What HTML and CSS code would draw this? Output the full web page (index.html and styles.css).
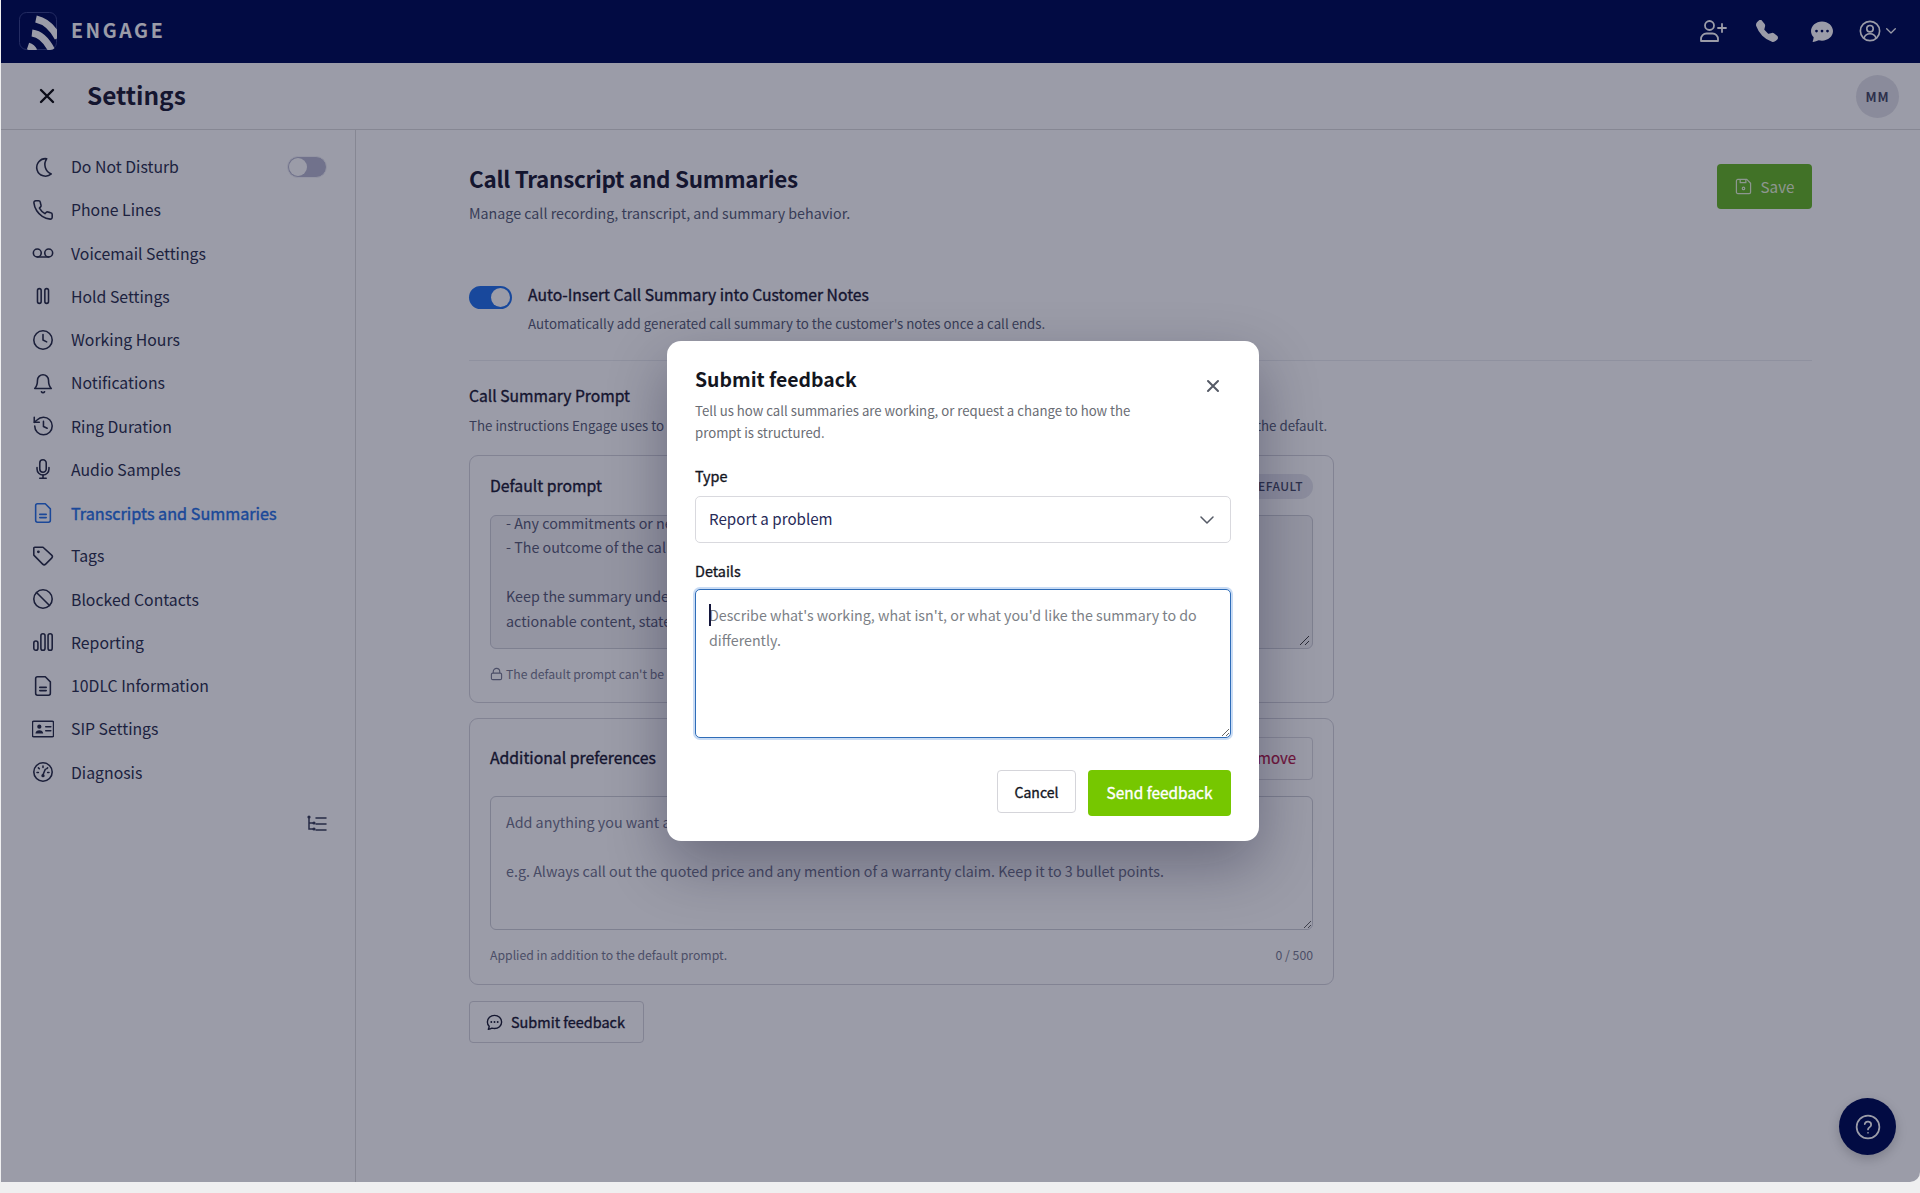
FILE: index.html
```html
<!DOCTYPE html>
<html lang="en">
<head>
<meta charset="utf-8">
<title>Settings</title>
<link rel="stylesheet" href="styles.css">
</head>
<body>
<div class="app">
  <header class="topbar">
    <div class="brand">
      <svg class="logo" viewBox="0 0 38 38"><defs><clipPath id="lc"><rect width="38" height="38" rx="7"/></clipPath></defs><rect x=".5" y=".5" width="37" height="37" rx="7" fill="#000d55" stroke="#39458a"/><g clip-path="url(#lc)" fill="none" stroke="#fff" stroke-width="7"><path d="M17 7c9 2 17 9 22 19"/><path d="M13 21c9 1 15 8 20 18"/><path d="M9 34c3 1 5 3 6 5"/></g></svg>
      <span class="brand-name">ENGAGE</span>
    </div>
    <div class="top-actions">
      <svg class="ti" viewBox="0 0 27 24"><path d="M1.5 22v-2a5.5 5.5 0 0 1 5.5-5.500h6a5.500 5.500 0 0 1 5.500 5.500v2z"/><circle cx="10" cy="6.500" r="4.500"/><path d="M22.500 5v8M18.500 9h8"/></svg>
      <svg class="tf" viewBox="0 0 16 16"><path d="M1.885.511a1.745 1.745 0 0 1 2.61.163L6.29 2.98c.329.423.445.974.315 1.494l-.547 2.19a.678.678 0 0 0 .178.643l2.457 2.457a.678.678 0 0 0 .644.178l2.189-.547a1.745 1.745 0 0 1 1.494.315l2.306 1.794c.829.645.905 1.87.163 2.611l-1.034 1.034c-.74.74-1.846 1.065-2.877.702a18.634 18.634 0 0 1-7.01-4.42 18.634 18.634 0 0 1-4.42-7.009c-.362-1.03-.037-2.137.703-2.877L1.885.511z"/></svg>
      <svg class="tf tf-chat" viewBox="0 0 16 16"><path d="M16 8c0 3.866-3.582 7-8 7a9.06 9.06 0 0 1-2.347-.306c-.584.296-1.925.864-4.181 1.234-.2.032-.352-.176-.273-.362.354-.836.674-1.95.77-2.966C.744 11.37 0 9.76 0 8c0-3.866 3.582-7 8-7s8 3.134 8 7zM5 8a1 1 0 1 0-2 0 1 1 0 0 0 2 0zm4 0a1 1 0 1 0-2 0 1 1 0 0 0 2 0zm3 1a1 1 0 1 0 0-2 1 1 0 0 0 0 2z"/></svg>
      <div class="account">
        <svg class="ti ti-user" viewBox="0 0 24 24"><circle cx="12" cy="12" r="10.500"/><circle cx="12" cy="9.500" r="3.500"/><path d="M5.500 19.500c1-3 3.500-4.500 6.500-4.500s5.500 1.500 6.500 4.500"/></svg>
        <svg class="ti ti-chev" viewBox="0 0 10 6"><path d="M.7.7 5 5l4.300-4.300"/></svg>
      </div>
    </div>
  </header>

  <div class="page-head">
    <div class="page-title">
      <svg class="close-main" viewBox="0 0 16 16"><path d="M2 2l12 12M14 2 2 14"/></svg>
      <h1>Settings</h1>
    </div>
    <div class="avatar">MM</div>
  </div>

  <div class="layout">
    <nav class="sidebar">
      <div class="nav-item">
        <svg class="ni" viewBox="0 0 24 24"><path d="M16 3a9.500 9.500 0 1 0 5 16.500A11 11 0 0 1 16 3z"/></svg>
        <span class="nav-label">Do Not Disturb</span>
        <span class="switch-off"><i></i></span>
      </div>
      <div class="nav-item">
        <svg class="ni" viewBox="0 0 24 24"><path d="M22 16.920v3a2 2 0 0 1-2.180 2 19.790 19.790 0 0 1-8.630-3.070 19.500 19.500 0 0 1-6-6 19.790 19.790 0 0 1-3.070-8.670A2 2 0 0 1 4.110 2h3a2 2 0 0 1 2 1.720 12.840 12.840 0 0 0 .7 2.810 2 2 0 0 1-.45 2.110L8.090 9.910a16 16 0 0 0 6 6l1.270-1.270a2 2 0 0 1 2.110-.45 12.840 12.840 0 0 0 2.810.7A2 2 0 0 1 22 16.920z"/></svg>
        <span class="nav-label">Phone Lines</span>
      </div>
      <div class="nav-item">
        <svg class="ni" viewBox="0 0 24 24"><circle cx="5.800" cy="12" r="4.300"/><circle cx="18.200" cy="12" r="4.300"/><path d="M5.800 16.300h12.400"/></svg>
        <span class="nav-label">Voicemail Settings</span>
      </div>
      <div class="nav-item">
        <svg class="ni" viewBox="0 0 24 24"><rect x="6" y="4" width="4" height="16" rx="2"/><rect x="14" y="4" width="4" height="16" rx="2"/></svg>
        <span class="nav-label">Hold Settings</span>
      </div>
      <div class="nav-item">
        <svg class="ni" viewBox="0 0 24 24"><circle cx="12" cy="12" r="10"/><path d="M12 6v6l4 2"/></svg>
        <span class="nav-label">Working Hours</span>
      </div>
      <div class="nav-item">
        <svg class="ni" viewBox="0 0 24 24"><path d="M6 9a6 6 0 0 1 12 0c0 6 3 9 3 9H3s3-3 3-9"/><path d="M10.300 21.500a2 2 0 0 0 3.400 0"/></svg>
        <span class="nav-label">Notifications</span>
      </div>
      <div class="nav-item">
        <svg class="ni" viewBox="0 0 24 24"><path d="M3 12a9.500 9.500 0 1 0 9.500-9.500A9.750 9.750 0 0 0 5.500 5.500L2.500 8"/><path d="M2.500 2.500V8H8"/><path d="M12.500 7v5.500l4 2"/></svg>
        <span class="nav-label">Ring Duration</span>
      </div>
      <div class="nav-item">
        <svg class="ni" viewBox="0 0 24 24"><path d="M12 2a3.500 3.500 0 0 0-3.500 3.500V12a3.500 3.500 0 0 0 7 0V5.500A3.500 3.500 0 0 0 12 2z"/><path d="M18.500 10.500V12a6.500 6.500 0 0 1-13 0v-1.500"/><path d="M12 18.500V22M8.500 22h7"/></svg>
        <span class="nav-label">Audio Samples</span>
      </div>
      <div class="nav-item is-active">
        <svg class="ni" viewBox="0 0 24 24"><path d="M14.500 2H6a2 2 0 0 0-2 2v16a2 2 0 0 0 2 2h12a2 2 0 0 0 2-2V7.500L14.500 2z"/><path d="M8.500 13.500h7M8.500 17h7"/></svg>
        <span class="nav-label">Transcripts and Summaries</span>
      </div>
      <div class="nav-item">
        <svg class="ni" viewBox="0 0 24 24"><path d="M12 2.500H3a1 1 0 0 0-1 1V11l9.600 9.800c.9.900 2.400.9 3.300 0l6.500-6.500c.9-.9.9-2.400 0-3.300L12 2.500z"/><circle cx="7" cy="7.500" r=".7"/></svg>
        <span class="nav-label">Tags</span>
      </div>
      <div class="nav-item">
        <svg class="ni" viewBox="0 0 24 24"><circle cx="12" cy="12" r="10"/><path d="M4.930 4.930l14.140 14.140"/></svg>
        <span class="nav-label">Blocked Contacts</span>
      </div>
      <div class="nav-item">
        <svg class="ni" viewBox="0 0 24 24"><rect x="2" y="11" width="4.500" height="10" rx="2.250"/><rect x="9.700" y="3" width="4.500" height="18" rx="2.250"/><rect x="17.500" y="3" width="4.500" height="18" rx="2.250"/></svg>
        <span class="nav-label">Reporting</span>
      </div>
      <div class="nav-item">
        <svg class="ni" viewBox="0 0 24 24"><path d="M14.500 2H6a2 2 0 0 0-2 2v16a2 2 0 0 0 2 2h12a2 2 0 0 0 2-2V7.500L14.500 2z"/><path d="M8.500 13.500h7M8.500 17h7"/></svg>
        <span class="nav-label">10DLC Information</span>
      </div>
      <div class="nav-item">
        <svg class="ni" viewBox="0 0 24 24"><rect x=".5" y="3.500" width="23" height="17" rx="1.500"/><circle class="ink" cx="8" cy="9.500" r="2.300"/><path class="ink" d="M3.800 17c0-2.500 2-3.700 4.200-3.700s4.200 1.200 4.200 3.700z"/><path d="M15 9.500h5.500M15 14h5.500"/></svg>
        <span class="nav-label">SIP Settings</span>
      </div>
      <div class="nav-item">
        <svg class="ni" viewBox="0 0 24 24"><circle cx="12" cy="12" r="10"/><path d="M12 15l2.500-6M12 5.500v1.500M7 7.500l1 1M5.500 12.500H7M17 7.500l-1 1M17 12.500h1.500"/><circle class="ink" cx="12" cy="16" r="1.800"/></svg>
        <span class="nav-label">Diagnosis</span>
      </div>
      <div class="nav-foot">
        <svg class="tree" viewBox="0 0 20 18"><path d="M2 2v12h5M2 8h5M9 3h10M9 9h10M9 15h10"/><circle class="dim-ink" cx="2" cy="2" r="1.600"/><circle class="dim-ink" cx="7" cy="8" r="1.600"/><circle class="dim-ink" cx="7" cy="14" r="1.600"/></svg>
      </div>
    </nav>

    <main class="main">
      <div class="main-head">
        <div>
          <h2 class="main-title">Call Transcript and Summaries</h2>
          <p class="main-sub">Manage call recording, transcript, and summary behavior.</p>
        </div>
        <button class="btn-save">
          <svg class="save-icon" viewBox="0 0 18 18"><path d="M3 1.500h9.500l4 4V15a1.500 1.500 0 0 1-1.500 1.500H3A1.500 1.500 0 0 1 1.500 15V3A1.500 1.500 0 0 1 3 1.500z"/><path d="M5.500 1.500V5h6V1.500"/><circle cx="9" cy="11" r="1.300"/></svg>
          Save
        </button>
      </div>

      <div class="auto-row">
        <span class="switch-on"><i></i></span>
        <div>
          <div class="auto-label">Auto-Insert Call Summary into Customer Notes</div>
          <div class="auto-desc">Automatically add generated call summary to the customer's notes once a call ends.</div>
        </div>
      </div>

      <hr class="divider">

      <h3 class="section-title">Call Summary Prompt</h3>
      <p class="section-sub">The instructions Engage uses to create your call summaries. Add your own preferences to adjust what gets highlighted on top of the default.</p>

      <section class="card">
        <div class="card-head">
          <span class="card-title">Default prompt</span>
          <span class="badge">DEFAULT</span>
        </div>
        <div class="prompt-box">
          <div class="prompt-text">- Any commitments or next steps agreed on
- The outcome of the call

Keep the summary under five sentences. If the call has no
actionable content, state that plainly.</div>
          <svg class="grip" viewBox="0 0 12 12"><path d="M11 2 2 11M11 7l-4 4"/></svg>
        </div>
        <div class="lock-row">
          <svg class="lock" viewBox="0 0 14 14"><path d="M3.500 6V4.500a3.500 3.500 0 0 1 7 0V6"/><rect x="1.500" y="6" width="11" height="7" rx="1.500"/></svg>
          <span>The default prompt can't be edited.</span>
        </div>
      </section>

      <section class="card card-two">
        <div class="card-head card-head-two">
          <span class="card-title">Additional preferences</span>
          <button class="btn-remove">Remove</button>
        </div>
        <textarea class="pref-input" placeholder="Add anything you want added to the summary.

e.g. Always call out the quoted price and any mention of a warranty claim. Keep it to 3 bullet points."></textarea>
        <div class="pref-foot">
          <span>Applied in addition to the default prompt.</span>
          <span>0 / 500</span>
        </div>
      </section>

      <button class="btn-feedback">
        <svg class="fb-icon" viewBox="0 0 16 16"><path d="M8 1.300c3.700 0 6.700 2.700 6.700 6.200S11.700 13.700 8 13.700c-.9 0-1.700-.2-2.500-.4-.8.500-1.900.9-3.300 1.100.4-.9.700-1.800.8-2.800C1.900 10.500 1.300 9.100 1.300 7.500 1.300 4 4.300 1.300 8 1.300z"/><path class="dots" d="M5 7.500h.01M8 7.500h.01M11 7.500h.01"/></svg>
        <span class="btn-text">Submit feedback</span>
      </button>
    </main>
  </div>

  <button class="fab" aria-label="Help">
    <svg viewBox="0 0 24 24"><circle cx="12" cy="12" r="10.500"/><path d="M9 9.300a3 3 0 0 1 5.900.9c0 2-2.900 2.300-2.900 4"/><path d="M12 17.300h.01"/></svg>
  </button>

  <div class="scrim">
    <div class="modal">
      <div class="modal-head">
        <div>
          <h2 class="modal-title">Submit feedback</h2>
          <p class="modal-desc">Tell us how call summaries are working, or request a change to how the prompt is structured.</p>
        </div>
        <svg class="modal-close" viewBox="0 0 14 14"><path d="M2 2l10 10M12 2 2 12"/></svg>
      </div>
      <label class="field-label label-type">Type</label>
      <div class="select">
        <span class="select-value">Report a problem</span>
        <svg class="select-chev" viewBox="0 0 14 8"><path d="M1 1l6 6 6-6"/></svg>
      </div>
      <label class="field-label label-details">Details</label>
      <div class="details-wrap">
        <textarea class="details" placeholder="Describe what's working, what isn't, or what you'd like the summary to do differently."></textarea>
        <span class="caret"></span>
      </div>
      <div class="modal-actions">
        <button class="btn-cancel">Cancel</button>
        <button class="btn-send">Send feedback</button>
      </div>
    </div>
  </div>
</div>
</body>
</html>
```
FILE: styles.css
```css
* { box-sizing: border-box; }
html, body { margin: 0; padding: 0; }
body {
  height: 1193px;
  background: #efeff0;
  font-family: "Noto Sans CJK SC", "Noto Sans", sans-serif;
  color: #252a45;
  overflow: hidden;
}
h1, h2, h3, p { margin: 0; }
button { font-family: inherit; cursor: pointer; }

.app {
  position: relative;
  margin-left: 1px;
  height: 1182px;
  background: #fff;
  display: flex;
  flex-direction: column;
  overflow: hidden;
  border-bottom-right-radius: 10px;
}

/* top bar */
.topbar {
  height: 63px;
  flex: none;
  background: #000e58;
  display: flex;
  align-items: center;
  justify-content: space-between;
  padding: 0 24px 2px 18px;
}
.brand { display: flex; align-items: center; gap: 14px; }
.logo { width: 38px; height: 38px; }
.brand-name { color: #fff; font-size: 19.500px; font-weight: 700; letter-spacing: 2.600px; line-height: 24px; margin-top: -2px; }
.top-actions { display: flex; align-items: center; }
.ti { fill: none; stroke: #fff; stroke-width: 1.8; stroke-linecap: round; stroke-linejoin: round; }
.top-actions > .ti { width: 28px; height: 24px; margin-right: 29px; }
.tf { width: 22px; height: 22px; fill: #fff; margin-right: 33px; }
.tf-chat { margin-right: 26px; }
.account { display: flex; align-items: center; gap: 5px; }
.ti-user { width: 22px; height: 22px; }
.ti-chev { width: 10px; height: 6px; stroke-width: 1.3; }

/* page head */
.page-head {
  height: 67px;
  flex: none;
  display: flex;
  align-items: center;
  justify-content: space-between;
  padding: 0 21px 0 38px;
  background: #fff;
  border-bottom: 1px solid #ddd;
}
.page-title { display: flex; align-items: center; gap: 32px; }
.close-main { width: 16px; height: 16px; fill: none; stroke: #111; stroke-width: 2.4; stroke-linecap: round; }
.page-title h1 { font-size: 24.400px; font-weight: 700; line-height: 32px; color: #1e2136; margin-top: -2px; }
.avatar {
  width: 43px; height: 43px; border-radius: 50%;
  background: #e3e3e9;
  display: flex; align-items: center; justify-content: center;
  font-size: 13px; font-weight: 700; letter-spacing: .8px; color: #4a4c66;
}

/* layout */
.layout { flex: 1; display: flex; min-height: 0; }
.sidebar {
  width: 355px;
  flex: none;
  border-right: 1px solid #dcdcdc;
  padding: 15px 28px 0 30px;
}
.nav-item {
  height: 43.250px;
  display: flex;
  align-items: center;
  gap: 16px;
}
.ni {
  width: 24px; height: 24px; flex: none;
  fill: none; stroke: #2b3048; stroke-width: 1.700; stroke-linecap: round; stroke-linejoin: round;
  transform: scale(.92);
}
.ink { fill: #2b3048; stroke: none; }
.nav-label { font-size: 15.800px; color: #2e3350; flex: 1; white-space: nowrap; }
.is-active .ni { stroke: #2a74e6; }
.is-active .nav-label { font-size: 16.200px; color: #2a74e6; -webkit-text-stroke: .4px #2a74e6; }
.switch-off {
  width: 40px; height: 22px; flex: none; border-radius: 11px;
  background: #b9bad0; padding: 2px;
  border: 1px solid #f3f3f8;
  display: flex;
}
.switch-off i { width: 18px; height: 18px; margin-top: -1px; margin-left: -1px; border-radius: 50%; background: #fff; }
.nav-foot { display: flex; justify-content: flex-end; margin-top: 21px; }
.tree { width: 20px; height: 18px; fill: none; stroke: #3d415b; stroke-width: 1.500; stroke-linecap: round; }
.dim-ink { fill: #3d415b; stroke: none; }

/* main */
.main { flex: 1; padding: 33px 108px 0 113px; min-width: 0; }
.main-head { display: flex; justify-content: space-between; align-items: flex-start; }
.main-title { font-size: 22.450px; letter-spacing: -.3px; line-height: 30px; font-weight: 700; color: #1e2136; }
.main-sub { margin-top: 10px; font-size: 14.250px; line-height: 20px; color: #5b5f78; }
.btn-save {
  margin-top: 1px;
  width: 95px; height: 45px;
  border: 0; border-radius: 4px;
  background: #69b928;
  color: #e8f5d8;
  font-size: 15.200px;
  padding: 0 0 2px;
  display: flex; align-items: center; justify-content: center; gap: 9px;
}
.save-icon { width: 17px; height: 17px; margin-top: 2px; fill: none; stroke: #e8f5d8; stroke-width: 1.300; stroke-linejoin: round; }
.auto-row { display: flex; gap: 16px; margin-top: 62px; }
.switch-on {
  width: 43px; height: 23px; margin-top: 1px; flex: none; border-radius: 12px;
  background: #2574eb; display: flex; justify-content: flex-end; padding: 2px 2px 2px 0;
}
.switch-on i { width: 19px; height: 19px; border-radius: 50%; background: #fff; }
.auto-label { margin-top: -1px; font-size: 15.700px; line-height: 22px; color: #1e2136; -webkit-text-stroke: .35px #1e2136; }
.auto-desc { margin-top: 8px; font-size: 13.300px; line-height: 20px; color: #5b5f78; }
.divider { border: 0; border-top: 1px solid #ecedf0; margin: 26px 0 24px; }
.section-title { font-size: 15.650px; line-height: 22px; font-weight: 400; color: #1e2136; -webkit-text-stroke: .35px #1e2136; }
.section-sub { margin-top: 8.500px; font-size: 13.300px; line-height: 20px; color: #5b5f78; white-space: nowrap; }

.card {
  margin-top: 19.500px;
  border: 1px solid #d5d5dc;
  border-radius: 9px;
  padding: 18px 20px 18px;
  width: 865px;
  height: 248px;
}
.card-two { margin-top: 15px; height: 267px; }
.card-head { height: 25px; display: flex; justify-content: space-between; align-items: center; }
.card-head-two { height: 43px; }
.card-title { margin-top: -3px; font-size: 15.750px; font-weight: 400; color: #1e2136; -webkit-text-stroke: .35px #1e2136; }
.badge {
  height: 25px; padding: 0 10px 2px; border-radius: 13px;
  background: #e6e7ee;
  display: flex; align-items: center;
  font-size: 12px; font-weight: 500; letter-spacing: .5px; color: #4a4e68;
}
.btn-remove {
  height: 43px; padding: 0 16px 2px;
  border: 1px solid #dcdce2; border-radius: 4px;
  background: transparent;
  font-size: 15px; color: #b8204a; -webkit-text-stroke: .2px #b8204a;
}
.prompt-box {
  position: relative;
  margin-top: 16px;
  height: 134px;
  border: 1px solid #cfd0d8;
  border-radius: 6px;
  background: #f3f3f6;
  padding: 0 15px;
  overflow: hidden;
}
.prompt-text {
  margin-top: -5.500px;
  font-size: 14.300px; line-height: 24.600px;
  color: #5c6079;
  white-space: pre;
}
.grip { position: absolute; right: 2px; bottom: 2px; width: 12px; height: 12px; fill: none; stroke: #444; stroke-width: 1; }
.lock-row { margin-top: 15px; display: flex; align-items: center; gap: 3px; font-size: 12.200px; line-height: 20px; color: #7b7e93; }
.lock { width: 13px; height: 14px; fill: none; stroke: #7b7e93; stroke-width: 1.200; }
.pref-input {
  display: block;
  margin-top: 16px;
  width: 100%;
  height: 134px;
  border: 1px solid #cfd0d8;
  border-radius: 6px;
  background: transparent;
  padding: 13px 15px;
  font: inherit;
  font-size: 14.300px; line-height: 24.600px;
  resize: vertical;
  outline: 0;
}
.pref-input::placeholder { color: #75788f; opacity: 1; }
.pref-foot { margin-top: 15px; display: flex; justify-content: space-between; font-size: 12.250px; line-height: 20px; color: #7b7e93; }
.btn-feedback {
  margin-top: 16px;
  width: 175px; height: 42px;
  border: 1px solid #d5d5dc; border-radius: 4px;
  background: transparent;
  display: flex; align-items: center; gap: 8px;
  padding: 0 0 0 16px;
  font-size: 14.450px; color: #1e2136; -webkit-text-stroke: .35px #1e2136;
}
.btn-text { margin-top: -1px; }
.fb-icon { width: 17px; height: 17px; fill: none; stroke: #1e2136; stroke-width: 1.300; stroke-linejoin: round; stroke-linecap: round; }
.dots { stroke-width: 1.800; }

/* help */
.fab {
  position: absolute; right: 24px; bottom: 27px;
  width: 57px; height: 57px; border: 0; border-radius: 50%;
  background: #000e58;
  display: flex; align-items: center; justify-content: center;
  padding: 0;
  box-shadow: 0 4px 12px rgba(0,0,0,.2);
}
.fab svg { width: 26px; height: 26px; fill: none; stroke: #fff; stroke-width: 1.600; stroke-linecap: round; }

/* modal */
.scrim {
  position: absolute; inset: 0;
  background: rgba(5, 7, 37, .4);
  display: flex; align-items: center; justify-content: center;
  padding-left: 5px;
}
.modal {
  width: 592px;
  height: 500px;
  background: #fff;
  border-radius: 14px;
  padding: 25px 28px;
  box-shadow: 0 24px 60px rgba(5, 7, 37, .32);
}
.modal-head { display: flex; justify-content: space-between; align-items: flex-start; }
.modal-title { margin-top: -1px; font-size: 19.400px; line-height: 28px; font-weight: 700; color: #14161f; }
.modal-desc { margin-top: 7px; width: 450px; font-size: 13.200px; line-height: 22px; color: #6a6d74; }
.modal-close { margin: 13px 11px 0 0; width: 14px; height: 14px; fill: none; stroke: #555a66; stroke-width: 2; stroke-linecap: round; }
.field-label { display: block; font-size: 14.400px; line-height: 20px; color: #14161f; -webkit-text-stroke: .35px #14161f; }
.label-type { margin-top: 22px; }
.label-details { margin-top: 18px; }
.select {
  margin-top: 10px;
  height: 47px;
  border: 1px solid #d9d9de;
  border-radius: 5px;
  display: flex; align-items: center; justify-content: space-between;
  padding: 0 16px 0 13px;
  font-size: 15.150px; color: #272a58;
}
.select-value { margin-top: -3px; }
.select-chev { width: 14px; height: 8px; fill: none; stroke: #555a66; stroke-width: 1.500; stroke-linecap: round; stroke-linejoin: round; }
.details-wrap { position: relative; margin-top: 8px; }
.details {
  display: block;
  width: 100%;
  height: 149px;
  border: 1px solid #2f6db8;
  border-radius: 5px;
  box-shadow: 0 0 0 2px #c9dcf5;
  padding: 13px 13px;
  font: inherit;
  font-size: 14.250px; line-height: 24.500px;
  resize: vertical;
  outline: 0;
}
.details::placeholder { color: #7c7f86; opacity: 1; }
.caret { position: absolute; left: 14px; top: 15px; width: 1.500px; height: 22px; background: #14163c; }
.modal-actions { margin-top: 32px; display: flex; justify-content: flex-end; gap: 12px; align-items: flex-start; }
.btn-cancel {
  width: 79px; height: 43px;
  background: #fff; border: 1px solid #d5d5da; border-radius: 4px;
  font-size: 14px; color: #14161f; -webkit-text-stroke: .35px #14161f;
}
.btn-send {
  width: 143px; height: 46px;
  background: #76c700; border: 0; border-radius: 4px;
  padding: 0 0 2px;
  font-size: 15.400px; color: #fff; -webkit-text-stroke: .35px #fff;
}
```
